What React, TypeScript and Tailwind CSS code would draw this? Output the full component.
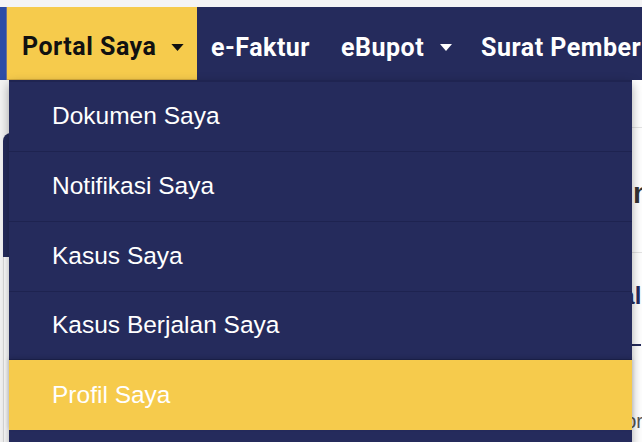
import React from "react";

const Caret = ({ className }: { className: string }) => (
  <svg viewBox="0 0 14 8" className={className} aria-hidden="true">
    <path d="M0 0 L14 0 L7 8 Z" fill="currentColor" />
  </svg>
);

const items = [
  { label: "Dokumen Saya", h: "h-[70px]" },
  { label: "Notifikasi Saya", h: "h-[70px]" },
  { label: "Kasus Saya", h: "h-[70px]" },
  { label: "Kasus Berjalan Saya", h: "h-[68px]" },
];

export default function App() {
  return (
    <div className="relative w-[642px] h-[442px] overflow-hidden bg-white font-['Liberation_Sans',Arial,sans-serif]">
      <div className="h-[7px] bg-[#f4f4f5]" />
      <nav className="flex h-[73px] bg-[#252b5c] font-['Roboto',Arial,sans-serif] font-bold text-[25px] tracking-[0.5px] whitespace-nowrap">
        <div className="w-[6px] shrink-0 bg-[#2b4ca6]" />
        <div className="w-px shrink-0 bg-[#6e7390]" />
        <div className="flex w-[190px] shrink-0 items-center gap-[15px] bg-[#f6cb4c] border-b border-[#d8ad3c] pl-[15px] pt-[8px] text-[#111]">
          <span>Portal Saya</span>
          <Caret className="w-[13px] h-[7px] text-[#111]" />
        </div>
        <div className="flex shrink-0 items-center pl-[14px] pr-[17px] pt-[8px] text-white">e-Faktur</div>
        <div className="flex shrink-0 items-center gap-[16px] pl-[14px] pr-[15px] pt-[8px] text-white">
          <span>eBupot</span>
          <Caret className="w-[12px] h-[7px] text-white" />
        </div>
        <div className="flex shrink-0 items-center px-[14px] pt-[8px] text-white">Surat Pemberitahuan</div>
      </nav>

      <div className="flex whitespace-nowrap">
        <div className="w-[540px] shrink-0 pl-[3px] bg-[#f3f3f3]">
          <div className="h-[53px]" />
          <div className="h-[124px] rounded-tl-[8px] bg-[#252b5c]" />
          <div className="h-[200px] border-l border-[#dcdcdc] bg-white" />
        </div>
        <div className="flex-1 bg-white">
          <div className="h-[48px] border-b border-[#e4e4e4]" />
          <div className="flex h-[125px] items-center border-b border-[#e4e4e4] pl-[85px] pt-[8px] text-[29px] font-bold text-[#333]">
            Informasi
          </div>
          <div className="pt-[25px]">
            <div className="inline-block border-b-2 border-[#252b5c] pb-[30px] text-[24px] font-bold text-[#252b5c]">
              Personal
            </div>
          </div>
          <div className="pl-[43px] pt-[60px] text-[20px] text-[#555]">Nomor Pokok</div>
        </div>
      </div>

      <div className="absolute left-[9px] top-[80px] w-[623px] bg-[#252b5c] border-t-2 border-[#1f2451] shadow-[0_4px_10px_rgba(0,0,0,0.35)] text-white text-[24.5px]">
        {items.map((it) => (
          <div
            key={it.label}
            className={`flex ${it.h} items-center border-b border-[#1e2350] pl-[43px]`}
          >
            {it.label}
          </div>
        ))}
        <div className="flex h-[70px] items-center bg-[#f6cb4c] pl-[43px] shadow-[0_-2px_4px_rgba(0,0,0,0.15)]">
          Profil Saya
        </div>
        <div className="h-[40px]" />
      </div>
    </div>
  );
}
